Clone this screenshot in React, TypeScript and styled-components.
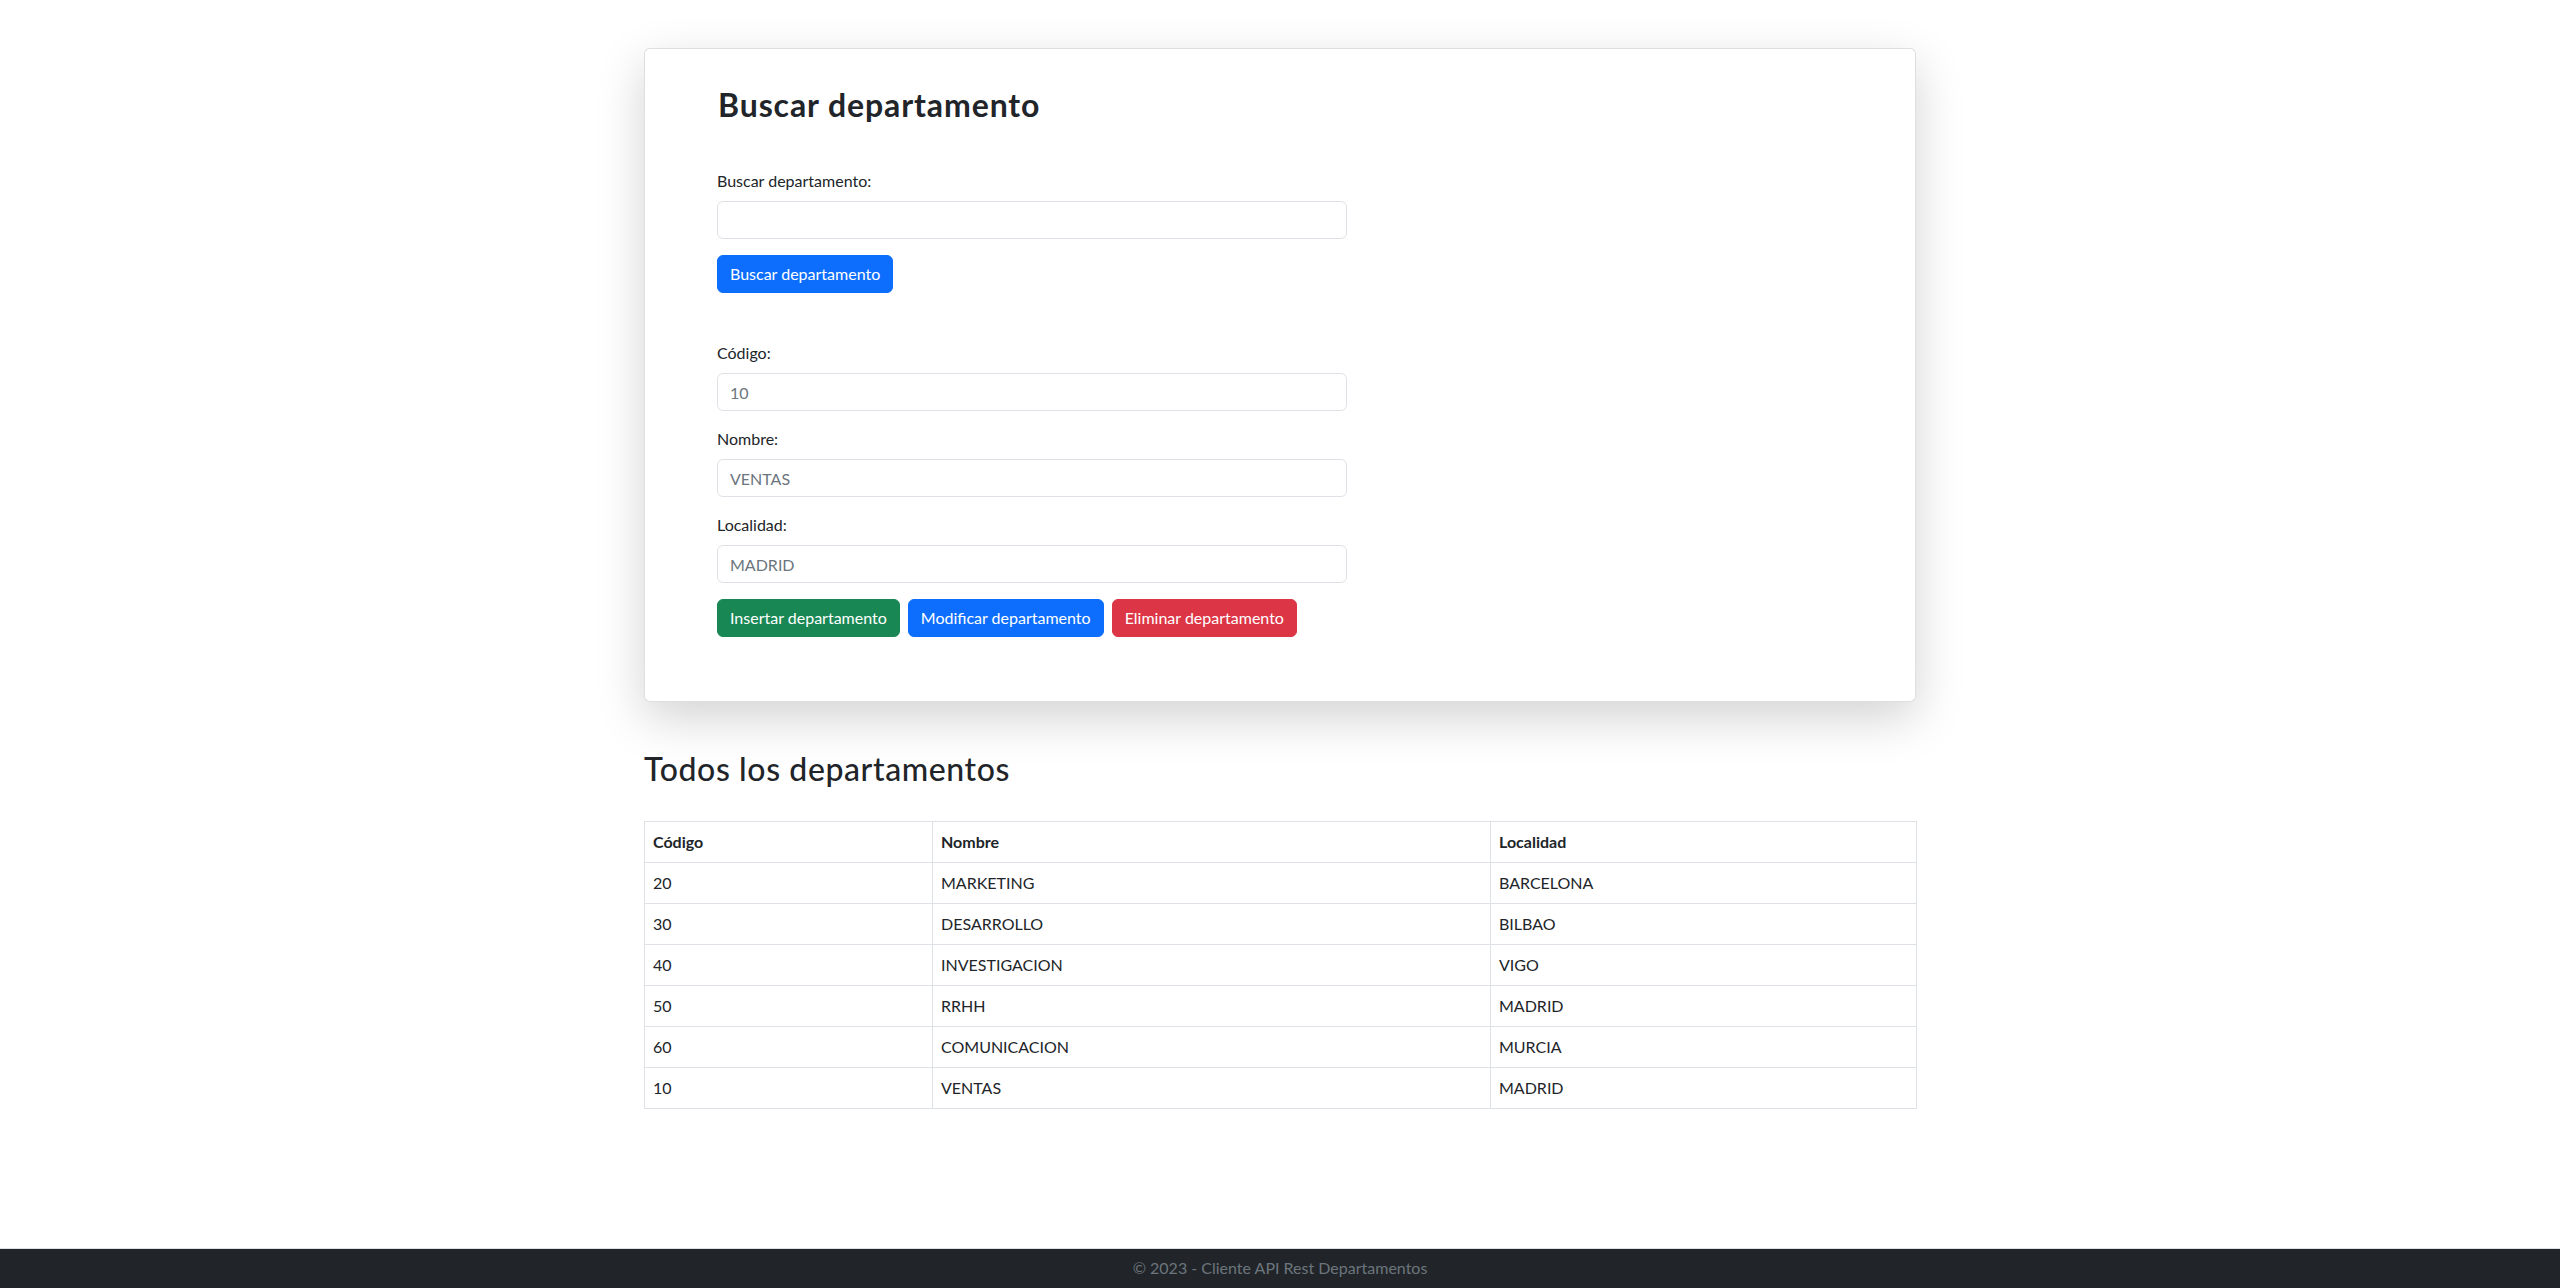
import { FC } from "react";
import styled, { createGlobalStyle } from "styled-components";

const GlobalStyle = createGlobalStyle`
   * {
      box-sizing: border-box;
   }
   html, body {
      margin: 0;
      padding: 0;
   }
   body {
      font-family: Lato, "Liberation Sans", sans-serif;
      font-size: 16px;
      line-height: 1.5;
      color: #212529;
      background-color: #ffffff;
   }
`;

const Page = styled.div`
   display: flex;
   flex-direction: column;
   min-height: 100vh;
`;

const Main = styled.main`
   flex: 1;
   width: 1272px;
   margin: 0 auto;
   padding: 48px 0 0;
`;

const Card = styled.section`
   background-color: #ffffff;
   border: 1px solid rgba(0, 0, 0, 0.125);
   border-radius: 6px;
   box-shadow: 0 16px 48px rgba(0, 0, 0, 0.175);
   padding: 37px 72px 64px;
`;

const CardTitle = styled.h2`
   margin: 0 0 45px 1px;
   font-size: 32px;
   font-weight: 700;
   line-height: 1.2;
   letter-spacing: 0.9px;
`;

const FormColumn = styled.div`
   width: 630px;
`;

const Block = styled.div<{ $gap?: number }>`
   margin-bottom: ${(p) => p.$gap ?? 16}px;
`;

const Label = styled.label`
   display: block;
   margin-bottom: 8px;
   font-size: 16px;
   line-height: 24px;
`;

const Input = styled.input`
   display: block;
   width: 100%;
   height: 38px;
   padding: 6px 12px;
   font-family: inherit;
   font-size: 16px;
   line-height: 24px;
   color: #212529;
   background-color: #ffffff;
   border: 1px solid #dee2e6;
   border-radius: 6px;
   outline: none;

   &::placeholder {
      color: #6c757d;
      opacity: 1;
   }
`;

const colors = {
   primary: "#0d6efd",
   success: "#198754",
   danger: "#dc3545",
};

const Button = styled.button<{ $variant: keyof typeof colors }>`
   height: 38px;
   padding: 6px 12px;
   font-family: inherit;
   font-size: 16px;
   line-height: 24px;
   color: #ffffff;
   background-color: ${(p) => colors[p.$variant]};
   border: 1px solid ${(p) => colors[p.$variant]};
   border-radius: 6px;
   cursor: pointer;
   white-space: nowrap;
`;

const ButtonRow = styled.div`
   display: flex;
   gap: 8px;
`;

const SectionTitle = styled.h2`
   margin: 48px 0 32px;
   font-size: 32px;
   font-weight: 500;
   line-height: 1.2;
   letter-spacing: 0.6px;
`;

const Table = styled.table`
   width: 100%;
   border-collapse: collapse;
   table-layout: fixed;
   font-size: 16px;
   line-height: 24px;
`;

const Th = styled.th<{ $w: number }>`
   width: ${(p) => p.$w}px;
   padding: 8px;
   text-align: left;
   font-weight: 700;
   border: 1px solid #dee2e6;
`;

const Td = styled.td`
   padding: 8px;
   border: 1px solid #dee2e6;
   color: #212529;
`;

const Footer = styled.footer`
   height: 40px;
   background-color: #212529;
   border-top: 1px solid #dee2e6;
   color: #6c757d;
   text-align: center;
   font-size: 16px;
   line-height: 38px;
`;

type Dept = { code: number; name: string; place: string };

const depts: Dept[] = [
   { code: 20, name: "MARKETING", place: "BARCELONA" },
   { code: 30, name: "DESARROLLO", place: "BILBAO" },
   { code: 40, name: "INVESTIGACION", place: "VIGO" },
   { code: 50, name: "RRHH", place: "MADRID" },
   { code: 60, name: "COMUNICACION", place: "MURCIA" },
   { code: 10, name: "VENTAS", place: "MADRID" },
];

const Field: FC<{ label: string; placeholder?: string; gap?: number }> = ({ label, placeholder, gap }) => (
   <Block $gap={gap}>
      <Label>{label}</Label>
      <Input placeholder={placeholder} />
   </Block>
);

const App: FC = () => {
   return (
      <Page>
         <GlobalStyle />
         <Main>
            <Card>
               <CardTitle>Buscar departamento</CardTitle>
               <FormColumn>
                  <Field label="Buscar departamento:" />
                  <Block $gap={48}>
                     <Button $variant="primary">Buscar departamento</Button>
                  </Block>
                  <Field label="Código:" placeholder="10" />
                  <Field label="Nombre:" placeholder="VENTAS" />
                  <Field label="Localidad:" placeholder="MADRID" />
                  <ButtonRow>
                     <Button $variant="success">Insertar departamento</Button>
                     <Button $variant="primary">Modificar departamento</Button>
                     <Button $variant="danger">Eliminar departamento</Button>
                  </ButtonRow>
               </FormColumn>
            </Card>

            <SectionTitle>Todos los departamentos</SectionTitle>
            <Table>
               <thead>
                  <tr>
                     <Th $w={288}>Código</Th>
                     <Th $w={558}>Nombre</Th>
                     <Th $w={426}>Localidad</Th>
                  </tr>
               </thead>
               <tbody>
                  {depts.map((d) => (
                     <tr key={d.code}>
                        <Td>{d.code}</Td>
                        <Td>{d.name}</Td>
                        <Td>{d.place}</Td>
                     </tr>
                  ))}
               </tbody>
            </Table>
         </Main>
         <Footer>© 2023 - Cliente API Rest Departamentos</Footer>
      </Page>
   );
};

export default App;
